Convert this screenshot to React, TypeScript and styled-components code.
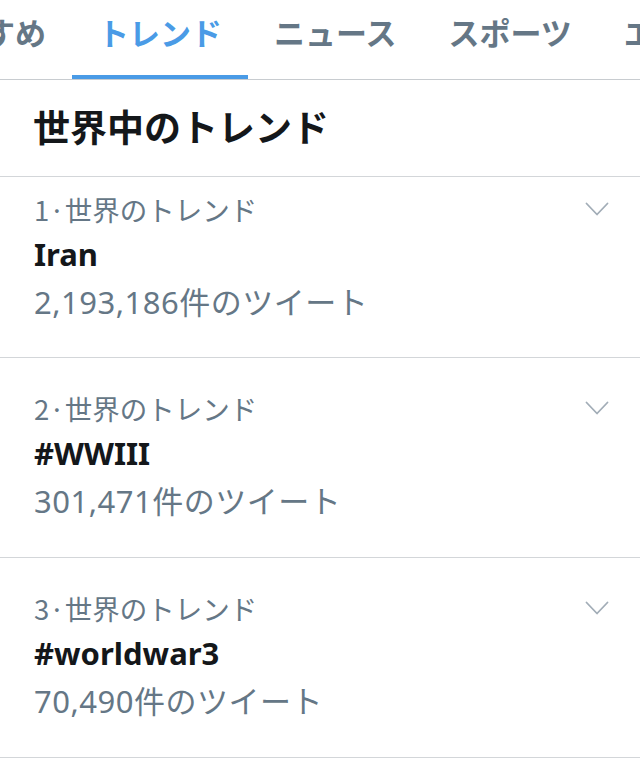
import React from "react";
import styled, { createGlobalStyle } from "styled-components";

const Global = createGlobalStyle`
  html, body { margin: 0; padding: 0; background: #ffffff; }
  body { font-family: "Noto Sans", "Noto Sans CJK JP", sans-serif; -webkit-font-smoothing: antialiased; }
  * { box-sizing: border-box; }
`;

const Page = styled.div`
  width: 640px;
  height: 760px;
  overflow: hidden;
  background: #fff;
`;

const TabBar = styled.nav`
  display: flex;
  height: 80px;
  border-bottom: 1px solid #c8ccd0;
  overflow: hidden;
  white-space: nowrap;
`;

const TabTrack = styled.div`
  display: flex;
  margin-left: -104px;
`;

const Tab = styled.div<{ $active?: boolean }>`
  position: relative;
  flex: none;
  padding: 6px 26px 0;
  font-family: "Noto Sans CJK JP", sans-serif;
  font-size: 31px;
  font-weight: 700;
  line-height: 52px;
  color: ${(p) => (p.$active ? "#4a9be6" : "#657786")};
  &::after {
    content: "";
    position: absolute;
    left: 0;
    right: 0;
    bottom: 0;
    height: 4px;
    background: ${(p) => (p.$active ? "#4a9be6" : "transparent")};
  }
`;

const Header = styled.h1`
  margin: 0;
  height: 97px;
  padding: 0 34px 4px 33px;
  display: flex;
  align-items: center;
  font-family: "Noto Sans CJK JP", sans-serif;
  font-size: 37px;
  font-weight: 700;
  color: #14171a;
  border-bottom: 1px solid #d3d6d9;
`;

const Row = styled.div<{ $first?: boolean }>`
  position: relative;
  height: ${(p) => (p.$first ? 181 : 200)}px;
  padding: ${(p) => (p.$first ? 13 : 31)}px 34px 0;
  border-bottom: 1px solid #d3d6d9;
`;

const Meta = styled.div`
  font-family: "Noto Sans CJK JP", sans-serif;
  font-size: 27.5px;
  line-height: 38px;
  color: #657786;
`;

const Name = styled.div`
  font-family: "Noto Sans", "Noto Sans CJK JP", sans-serif;
  font-size: 31px;
  font-weight: 700;
  line-height: 48px;
  color: #14171a;
  margin-top: 2px;
`;

const Count = styled.div`
  font-family: "Noto Sans", "Noto Sans CJK JP", sans-serif;
  font-size: 31px;
  letter-spacing: 0.5px;
  line-height: 48px;
  color: #657786;
`;

const Chevron = styled.svg<{ $first?: boolean }>`
  position: absolute;
  right: 31px;
  top: ${(p) => (p.$first ? 25 : 43)}px;
  width: 24px;
  height: 14px;
`;

const tabs = ["おすすめ", "トレンド", "ニュース", "スポーツ", "エンタメ"];

const trends = [
  { rank: 1, name: "Iran", count: "2,193,186" },
  { rank: 2, name: "#WWIII", count: "301,471" },
  { rank: 3, name: "#worldwar3", count: "70,490" },
];

export default function App() {
  return (
    <Page>
      <Global />
      <TabBar>
        <TabTrack>
          {tabs.map((t) => (
            <Tab key={t} $active={t === "トレンド"}>
              {t}
            </Tab>
          ))}
        </TabTrack>
      </TabBar>
      <Header>世界中のトレンド</Header>
      {trends.map((t, i) => (
        <Row key={t.rank} $first={i === 0}>
          <Meta>{t.rank}·世界のトレンド</Meta>
          <Name>{t.name}</Name>
          <Count>{t.count}件のツイート</Count>
          <Chevron $first={i === 0} viewBox="0 0 24 14">
            <path d="M1.5 1.5 L12 12.5 L22.5 1.5" fill="none" stroke="#a2adb7" strokeWidth="1.8" strokeLinecap="round" strokeLinejoin="round" />
          </Chevron>
        </Row>
      ))}
    </Page>
  );
}
